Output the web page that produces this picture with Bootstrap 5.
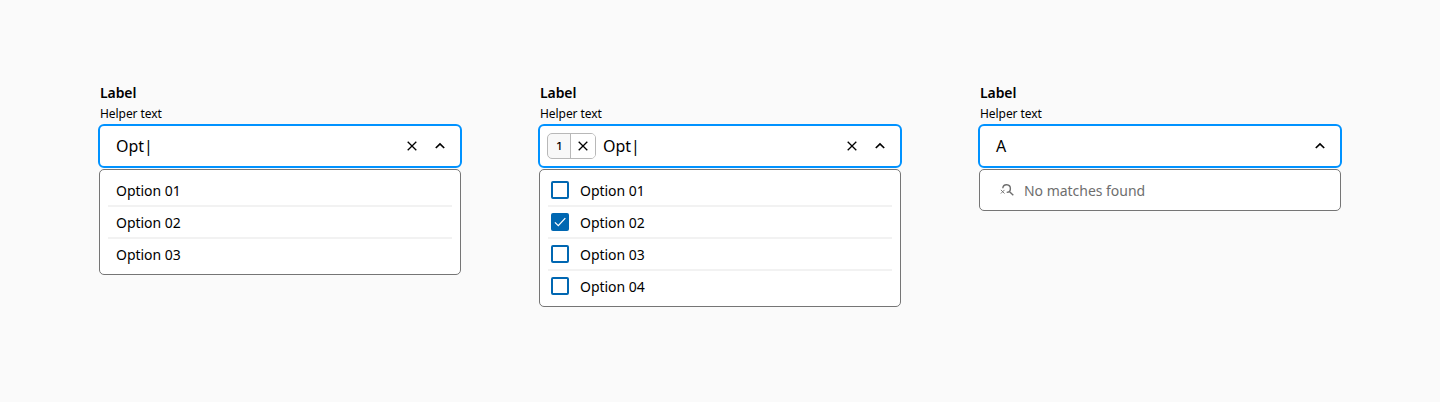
<!DOCTYPE html>
<html lang="en">
<head>
<meta charset="utf-8">
<meta name="viewport" content="width=device-width, initial-scale=1">
<title>Combobox</title>
<link href="https://cdn.jsdelivr.net/npm/bootstrap@5.3.0/dist/css/bootstrap.min.css" rel="stylesheet">
<style>
body{background:#fafafa;color:#000;font-family:"Noto Sans",sans-serif;font-size:14px;line-height:20px}
.board{padding:83px 98px 0;gap:76px}
.combo{width:364px;flex:none}
.combo-label{font-weight:600;line-height:20px;padding-left:2px;letter-spacing:-.1px}
.combo-help{font-size:12px;line-height:16px;padding-left:2px;margin:3px 0 2px;letter-spacing:-.06px}
.combo-field{height:44px;border:2px solid #0092ff;border-radius:6px;background:#fff;padding:0 12px 0 16px;font-size:16px;line-height:24px}
.combo-field.has-tag{padding-left:7px}
.combo-field svg{display:block}
.tag-chip{height:26px;width:49px;border:1px solid #b8b8b8;border-radius:5px;background:#f8f8f8;font:500 11px/16px Inter,sans-serif;overflow:hidden;margin-right:7px}
.tag-x{width:25px;border-left:1px solid #b8b8b8;background:#fff}
.combo-menu{margin:1px 1px 0;border:1px solid #757575;border-radius:5px;background:#fff;padding:4px 8px;letter-spacing:-.03px}
.combo-menu li{height:32px;padding-left:8px;position:relative}
.combo-menu li+li::before{content:"";position:absolute;left:0;right:0;top:-1px;height:2px;background:#f2f2f2}
.combo-menu li.pick{padding-left:3px;gap:11px}
.opt-text{padding-top:2px}
.combo-menu .form-check-input{width:18px;height:18px;border:2px solid #0067b2;border-radius:2px;background-color:#fff;margin:-1px 0 0}
.tick-box{width:18px;height:18px;border-radius:2px;background:#0067b2;margin-top:-1px}
.none-row{color:#6e6e6e;padding-left:12px;height:32px}
.icon-up{margin-left:12px}
</style>
</head>
<body>
<main class="board d-flex align-items-start">
  <section class="combo">
    <div class="combo-label">Label</div>
    <div class="combo-help">Helper text</div>
    <div class="combo-field d-flex align-items-center">
      <span>Opt|</span>
      <svg class="ms-auto" width="16" height="16" fill="none" stroke="#000" stroke-width="1.3"><path d="M3.7 3.7l8.6 8.6M12.3 3.7l-8.6 8.6"/></svg>
      <svg class="icon-up" width="16" height="16" fill="none" stroke="#000" stroke-width="1.7"><path d="M3.8 10L8 5.9l4.2 4.1"/></svg>
    </div>
    <ul class="combo-menu list-unstyled mb-0">
      <li class="d-flex align-items-center"><span class="opt-text">Option 01</span></li>
      <li class="d-flex align-items-center"><span class="opt-text">Option 02</span></li>
      <li class="d-flex align-items-center"><span class="opt-text">Option 03</span></li>
    </ul>
  </section>
  <section class="combo">
    <div class="combo-label">Label</div>
    <div class="combo-help">Helper text</div>
    <div class="combo-field has-tag d-flex align-items-center">
      <div class="tag-chip d-flex">
        <span class="flex-fill d-flex align-items-center justify-content-center">1</span>
        <span class="tag-x d-flex align-items-center justify-content-center"><svg width="16" height="16" fill="none" stroke="#000" stroke-width="1.3"><path d="M3.7 3.7l8.6 8.6M12.3 3.7l-8.6 8.6"/></svg></span>
      </div>
      <span>Opt|</span>
      <svg class="ms-auto" width="16" height="16" fill="none" stroke="#000" stroke-width="1.3"><path d="M3.7 3.7l8.6 8.6M12.3 3.7l-8.6 8.6"/></svg>
      <svg class="icon-up" width="16" height="16" fill="none" stroke="#000" stroke-width="1.7"><path d="M3.8 10L8 5.9l4.2 4.1"/></svg>
    </div>
    <ul class="combo-menu list-unstyled mb-0">
      <li class="pick d-flex align-items-center"><input class="form-check-input" type="checkbox" aria-label="Option 01"><span class="opt-text">Option 01</span></li>
      <li class="pick d-flex align-items-center"><span class="tick-box d-flex"><svg width="18" height="18" fill="none" stroke="#fff" stroke-width="1.3"><path d="M3.9 9.4l3.4 3.2 7-7.5"/></svg></span><span class="opt-text">Option 02</span></li>
      <li class="pick d-flex align-items-center"><input class="form-check-input" type="checkbox" aria-label="Option 03"><span class="opt-text">Option 03</span></li>
      <li class="pick d-flex align-items-center"><input class="form-check-input" type="checkbox" aria-label="Option 04"><span class="opt-text">Option 04</span></li>
    </ul>
  </section>
  <section class="combo">
    <div class="combo-label">Label</div>
    <div class="combo-help">Helper text</div>
    <div class="combo-field d-flex align-items-center">
      <span>A</span>
      <svg class="ms-auto" width="16" height="16" fill="none" stroke="#000" stroke-width="1.7"><path d="M3.8 10L8 5.9l4.2 4.1"/></svg>
    </div>
    <div class="combo-menu">
      <div class="none-row d-flex align-items-center">
        <svg width="16" height="16" fill="none" stroke="#6e6e6e" stroke-width="1.4"><path d="M2.8 6.2A3.8 3.8 0 1 1 6.7 10.4M9.3 9.4l4 3.9"/><path stroke-width=".9" d="M.9 7.9l3.6 3.6M4.5 7.9L.9 11.5"/></svg>
        <span class="opt-text ms-2">No matches found</span>
      </div>
    </div>
  </section>
</main>
<script src="https://cdn.jsdelivr.net/npm/bootstrap@5.3.0/dist/js/bootstrap.bundle.min.js"></script>
</body>
</html>
